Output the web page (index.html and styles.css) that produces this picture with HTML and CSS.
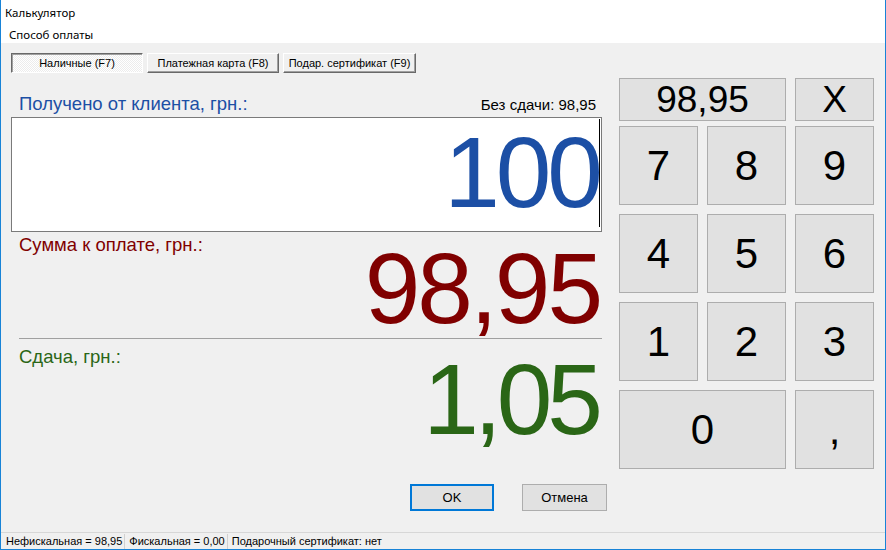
FILE: index.html
```html
<!DOCTYPE html>
<html lang="ru">
<head>
    <meta charset="UTF-8">
    <meta name="viewport" content="width=device-width, initial-scale=1.0">
    <title>Калькулятор</title>
    <link rel="stylesheet" href="styles.css">
</head>
<body>
    <div class="window">
        <div class="titlebar">Калькулятор</div>
        <div class="menubar">Способ оплаты</div>

        <div class="content">
            <div class="tabs">
                <button class="tab active">Наличные (F7)</button>
                <button class="tab">Платежная карта (F8)</button>
                <button class="tab">Подар. сертификат (F9)</button>
            </div>

            <div class="main">
                <div class="left">
                    <div class="label-row">
                        <span class="label received">Получено от клиента, грн.:</span>
                        <span class="exact">Без сдачи: 98,95</span>
                    </div>
                    <div class="entry">
                        <div class="entry-value">100</div>
                        <span class="caret"></span>
                    </div>

                    <div class="amount-row">
                        <span class="label due">Сумма к оплате, грн.:</span>
                        <span class="big due">98,95</span>
                    </div>
                    <div class="divider"></div>
                    <div class="amount-row change-row">
                        <span class="label change">Сдача, грн.:</span>
                        <span class="big change">1,05</span>
                    </div>
                </div>

                <div class="keypad">
                    <div class="key-top">
                        <button class="key key-sum">98,95</button>
                        <button class="key key-clear">X</button>
                    </div>
                    <div class="key-grid">
                        <button class="key">7</button>
                        <button class="key">8</button>
                        <button class="key">9</button>
                        <button class="key">4</button>
                        <button class="key">5</button>
                        <button class="key">6</button>
                        <button class="key">1</button>
                        <button class="key">2</button>
                        <button class="key">3</button>
                        <button class="key key-zero">0</button>
                        <button class="key">,</button>
                    </div>
                </div>
            </div>

            <div class="actions">
                <button class="btn btn-ok">OK</button>
                <button class="btn">Отмена</button>
            </div>
        </div>

        <div class="statusbar">
            <span class="status-item">Нефискальная = 98,95</span>
            <span class="status-item">Фискальная = 0,00</span>
            <span class="status-item">Подарочный сертификат: нет</span>
        </div>
    </div>
</body>
</html>
```

FILE: styles.css
```css
* {
    margin: 0;
    padding: 0;
    box-sizing: border-box;
    font-family: "Liberation Sans", Arial, sans-serif;
}

body {
    width: 886px;
    height: 550px;
    overflow: hidden;
    background: #fff;
}

.window {
    width: 886px;
    height: 550px;
    display: flex;
    flex-direction: column;
    border-left: 1px solid #1883d7;
    border-right: 1px solid #1883d7;
    border-bottom: 1px solid #1883d7;
    background-color: #f0f0f0;
}

.titlebar {
    height: 26px;
    line-height: 26px;
    padding-left: 4px;
    background: #fff;
    font-family: "Noto Sans", sans-serif;
    font-size: 11.5px;
    color: #000;
}

.menubar {
    height: 17px;
    line-height: 17px;
    padding-left: 8px;
    background: #fff;
    font-family: "Noto Sans", sans-serif;
    font-size: 11.5px;
    color: #000;
}

.content {
    flex: 1;
    padding: 10px 10px 0 10px;
}

/* payment tabs */
.tabs {
    display: flex;
    gap: 4px;
}

.tab {
    width: 132px;
    height: 20px;
    font-size: 11px;
    color: #000;
    background-color: #f0f0f0;
    border: 1px solid;
    border-color: #fff #696969 #696969 #fff;
    box-shadow: inset -1px -1px 0 #a0a0a0;
}

.tab:last-child {
    width: 133px;
}

.tab.active {
    border-color: #696969 #fff #fff #696969;
    box-shadow: inset 1px 1px 0 #a0a0a0;
    background-color: #f8f8f8;
    background-image: repeating-conic-gradient(#fff 0 25%, #ececec 0 50%);
    background-size: 2px 2px;
}

.main {
    display: flex;
    margin-top: 5px;
}

.left {
    width: 591px;
    padding-top: 16px;
}

.label-row {
    display: flex;
    justify-content: space-between;
    align-items: baseline;
    height: 20px;
    padding: 0 6px 0 8px;
}

.label {
    font-size: 18.5px;
    line-height: 20px;
}

.received {
    color: #1c4fa5;
}

.exact {
    font-size: 15px;
    color: #000;
}

.entry {
    position: relative;
    height: 115px;
    margin-top: 3px;
    background: #fff;
    border: 1px solid #7a7a7a;
    padding-top: 4px;
}

.entry-value {
    font-size: 100px;
    line-height: 1;
    text-align: right;
    color: #1c4fa5;
    letter-spacing: -4px;
    margin-right: 2px;
}

.caret {
    position: absolute;
    right: 1px;
    top: 1px;
    width: 1px;
    height: 108px;
    background: #000;
}

.amount-row {
    display: flex;
    justify-content: space-between;
    align-items: flex-start;
    margin-top: 3px;
    padding-left: 8px;
}

.big {
    font-size: 100px;
    line-height: 1;
    margin-top: 3px;
    margin-right: 2px;
    letter-spacing: -3px;
}

.due {
    color: #800000;
}

.change {
    color: #2a6616;
}

.divider {
    height: 1px;
    margin-left: 8px;
    background: #a0a0a0;
}

.change-row {
    margin-top: 8px;
}

.change-row .big {
    margin-top: 2px;
    margin-right: 4px;
    letter-spacing: -5px;
}

/* keypad */
.keypad {
    margin-left: 17px;
    width: 255px;
}

.key {
    font-size: 42px;
    color: #000;
    background-color: #e1e1e1;
    border: 1px solid #adadad;
}

.key-top {
    display: flex;
    gap: 9px;
    height: 43px;
}

.key-sum {
    width: 167px;
    font-size: 37px;
}

.key-clear {
    width: 79px;
    font-size: 37px;
}

.key-grid {
    display: grid;
    grid-template-columns: repeat(3, 79px);
    grid-auto-rows: 79px;
    gap: 9px;
    margin-top: 5px;
}

.key-zero {
    grid-column: span 2;
}

.actions {
    display: flex;
    gap: 28px;
    margin-top: 15px;
    padding-left: 399px;
}

.btn {
    width: 85px;
    height: 27px;
    font-size: 13px;
    color: #000;
    background-color: #e1e1e1;
    border: 1px solid #adadad;
}

.btn-ok {
    width: 84px;
    border: 2px solid #0078d7;
}

.statusbar {
    height: 17px;
    display: flex;
    align-items: center;
    padding-left: 4px;
    border-top: 1px solid #d7d7d7;
    font-size: 11px;
    color: #000;
}

.status-item {
    padding: 0 2px 0 1px;
    border-right: 1px solid #d0d0d0;
    line-height: 15px;
}

.status-item + .status-item {
    padding-left: 4px;
}

.status-item:last-child {
    border-right: none;
}
```
